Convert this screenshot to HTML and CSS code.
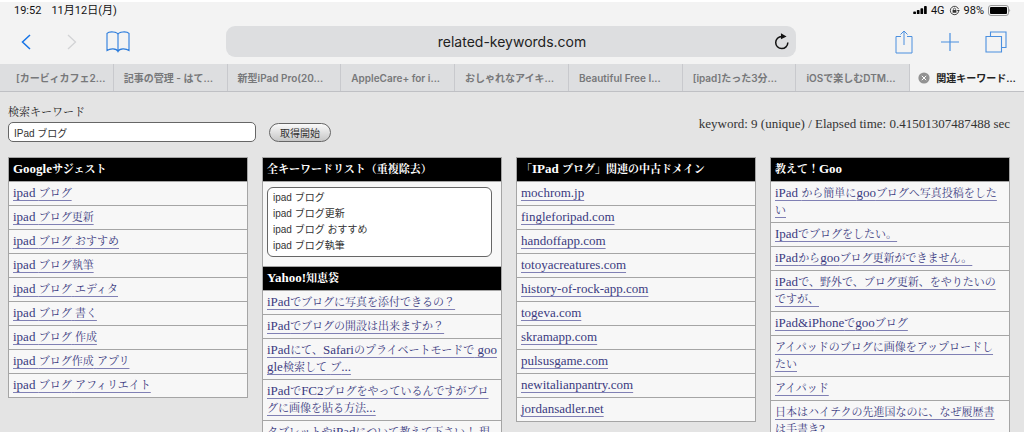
FILE: index.html
```html
<!DOCTYPE html>
<html lang="ja">
<head>
<meta charset="utf-8">
<title>関連キーワード取得ツール</title>
<link rel="stylesheet" href="styles.css">
</head>
<body>
<header class="browser">
  <div class="status">
    <div class="status-group status-clock"><span>19:52</span><span>11月12日(月)</span></div>
    <div class="status-group">
      <svg class="signal" viewBox="0 0 15 10" aria-hidden="true"><rect x="0" y="6" width="3" height="3" rx="0.8"/><rect x="4" y="4.5" width="3" height="4.5" rx="0.8"/><rect x="8" y="2.5" width="3" height="6.5" rx="0.8"/><rect x="12" y="0" width="3" height="9" rx="0.8"/></svg>
      <span>4G</span>
      <svg class="lock" viewBox="0 0 11 11" aria-hidden="true"><path d="M9.6 6.6A4.2 4.2 0 1 1 9.5 4.1" fill="none" stroke="#333" stroke-width="0.9"/><path d="M7.8 4.9h3L9.4 6.9z" fill="#333"/><rect x="3.6" y="5" width="3.8" height="2.8" rx="0.4" fill="#333"/><path d="M4.4 5V4.2a1.1 1.1 0 0 1 2.2 0V5" fill="none" stroke="#333" stroke-width="0.7"/></svg>
      <span>98%</span>
      <svg class="battery" viewBox="0 0 23 11" aria-hidden="true"><rect x="0.5" y="0.5" width="20" height="10" rx="2.5" fill="none" stroke="#999"/><rect x="2" y="2" width="17" height="7" rx="1" fill="#000"/><path d="M21.5 3.8q1.4 1.7 0 3.4z" fill="#777"/></svg>
    </div>
  </div>
  <div class="toolbar">
    <div class="tools tools-left">
      <button class="tool" type="button" aria-label="戻る"><svg class="chevron" viewBox="0 0 10 16"><path d="M9 1L1.5 8L9 15" stroke="#1674e6" stroke-width="1.5"/></svg></button>
      <button class="tool" type="button" aria-label="進む"><svg class="chevron" viewBox="0 0 10 16"><path d="M1 1l7.500 7L1 15" stroke="#d2d3d5" stroke-width="1.300"/></svg></button>
      <button class="tool" type="button" aria-label="ブックマーク"><svg class="book" viewBox="0 0 24 22"><path d="M12 3.500C11.500 0.300 3 0.300 1 2.300V19.500C4 17.300 10.500 17 12 20.500C13.500 17 20 17.300 23 19.500V2.300C21 0.300 12.500 0.300 12 3.500V20.500" stroke="#2a7bdc" stroke-width="1.100"/></svg></button>
    </div>
    <div class="address">
      <span class="address-text">related-keywords.com</span>
      <button class="reload" type="button" aria-label="再読み込み"><svg viewBox="0 0 15 17"><path d="M8.500 3.200H7.300A5.700 5.700 0 1 0 13 9" fill="none" stroke="#111" stroke-width="1.400"/><path d="M6.500 0.200L11.800 3.200L6.500 5.800z" fill="#111"/></svg></button>
    </div>
    <div class="tools tools-right">
      <button class="tool" type="button" aria-label="共有"><svg class="share" viewBox="0 0 18 24"><path d="M6 6.500H1V23H17V6.500H12M9 15V1M5.500 4.500L9 1L12.500 4.500" stroke="#4a8fdf" stroke-width="1"/></svg></button>
      <button class="tool" type="button" aria-label="新規タブ"><svg class="plus" viewBox="0 0 18 18"><path d="M9 0V18M0 9H18" stroke="#4a8fdf" stroke-width="1.200"/></svg></button>
      <button class="tool" type="button" aria-label="タブ一覧"><svg class="stack" viewBox="0 0 22 22"><path d="M1 5.500H16.500V21H1zM5.500 5.500V1H21V16.500H16.500" stroke="#4a8fdf" stroke-width="1.100"/></svg></button>
    </div>
  </div>
  <nav class="tabs">
    <a class="tab tab-first" href="#">[カービィカフェ2...</a>
    <a class="tab" href="#">記事の管理 - はて…</a>
    <a class="tab" href="#">新型iPad Pro(20...</a>
    <a class="tab" href="#">AppleCare+ for i...</a>
    <a class="tab" href="#">おしゃれなアイキ…</a>
    <a class="tab" href="#">Beautiful Free I...</a>
    <a class="tab" href="#">[ipad]たった3分…</a>
    <a class="tab" href="#">iOSで楽しむDTM…</a>
    <a class="tab tab-active" href="#"><svg class="close" viewBox="0 0 12 12" aria-hidden="true"><circle cx="6" cy="6" r="5.600" fill="#929292"/><path d="M3.800 3.800l4.400 4.400M8.200 3.800L3.800 8.200" stroke="#fff" stroke-width="1"/></svg>関連キーワード…</a>
  </nav>
</header>
<main class="page">
  <form class="search">
    <div class="search-main">
      <label class="search-label" for="keyword">検索キーワード</label>
      <div class="search-row">
        <input class="keyword" id="keyword" type="text" value="IPad ブログ">
        <button class="submit" type="button">取得開始</button>
      </div>
    </div>
    <p class="elapsed">keyword: 9 (unique) / Elapsed time: 0.41501307487488 sec</p>
  </form>
  <div class="columns">
    <table class="list">
      <tr><th><span class="en">Google</span>サジェスト</th></tr>
      <tr><td><a href="#"><span class="en">ipad </span>ブログ</a></td></tr>
      <tr><td><a href="#"><span class="en">ipad </span>ブログ更新</a></td></tr>
      <tr><td><a href="#"><span class="en">ipad </span>ブログ<span class="en"> </span>おすすめ</a></td></tr>
      <tr><td><a href="#"><span class="en">ipad </span>ブログ執筆</a></td></tr>
      <tr><td><a href="#"><span class="en">ipad </span>ブログ<span class="en"> </span>エディタ</a></td></tr>
      <tr><td><a href="#"><span class="en">ipad </span>ブログ<span class="en"> </span>書く</a></td></tr>
      <tr><td><a href="#"><span class="en">ipad </span>ブログ<span class="en"> </span>作成</a></td></tr>
      <tr><td><a href="#"><span class="en">ipad </span>ブログ作成<span class="en"> </span>アプリ</a></td></tr>
      <tr><td><a href="#"><span class="en">ipad </span>ブログ<span class="en"> </span>アフィリエイト</a></td></tr>
    </table>
    <table class="list">
      <tr><th><label for="all">全キーワードリスト（重複除去）</label></th></tr>
      <tr><td class="all-cell"><textarea class="all" id="all" rows="4">ipad ブログ
ipad ブログ更新
ipad ブログ おすすめ
ipad ブログ執筆</textarea></td></tr>
      <tr><th><span class="en">Yahoo!</span>知恵袋</th></tr>
      <tr><td><a href="#"><span class="en">iPad</span>でブログに写真を添付できるの？</a></td></tr>
      <tr><td><a href="#"><span class="en">iPad</span>でブログの開設は出来ますか？</a></td></tr>
      <tr><td><a href="#"><span class="en">iPad</span>にて、<span class="en">Safari</span>のプライベートモードで<span class="en"> google</span>検索して<span class="en"> </span>ブ<span class="en">...</span></a></td></tr>
      <tr><td><a href="#"><span class="en">iPad</span>で<span class="en">FC2</span>ブログをやっているんですがブログに画像を貼る方法<span class="en">...</span></a></td></tr>
      <tr><td><a href="#">タブレットや<span class="en">iPad</span>について教えて下さい！ 現</a></td></tr>
    </table>
    <table class="list">
      <tr><th>「<span class="en">IPad </span>ブログ」関連の中古ドメイン</th></tr>
      <tr><td><a class="en" href="#">mochrom.jp</a></td></tr>
      <tr><td><a class="en" href="#">fingleforipad.com</a></td></tr>
      <tr><td><a class="en" href="#">handoffapp.com</a></td></tr>
      <tr><td><a class="en" href="#">totoyacreatures.com</a></td></tr>
      <tr><td><a class="en" href="#">history-of-rock-app.com</a></td></tr>
      <tr><td><a class="en" href="#">togeva.com</a></td></tr>
      <tr><td><a class="en" href="#">skramapp.com</a></td></tr>
      <tr><td><a class="en" href="#">pulsusgame.com</a></td></tr>
      <tr><td><a class="en" href="#">newitalianpantry.com</a></td></tr>
      <tr><td><a class="en" href="#">jordansadler.net</a></td></tr>
    </table>
    <table class="list">
      <tr><th>教えて！<span class="en">Goo</span></th></tr>
      <tr><td><a href="#"><span class="en">iPad </span>から簡単に<span class="en">goo</span>ブログへ写真投稿をしたい</a></td></tr>
      <tr><td><a href="#"><span class="en">Ipad</span>でブログをしたい。</a></td></tr>
      <tr><td><a href="#"><span class="en">iPad</span>から<span class="en">goo</span>ブログ更新ができません。</a></td></tr>
      <tr><td><a href="#"><span class="en">iPad</span>で、野外で、ブログ更新、をやりたいのですが、</a></td></tr>
      <tr><td><a href="#"><span class="en">iPad&amp;iPhone</span>で<span class="en">goo</span>ブログ</a></td></tr>
      <tr><td><a href="#">アイパッドのブログに画像をアップロードし<br>たい</a></td></tr>
      <tr><td><a href="#">アイパッド</a></td></tr>
      <tr><td><a href="#">日本はハイテクの先進国なのに、なぜ履歴書は手書き<span class="en">?</span></a></td></tr>
    </table>
  </div>
</main>
</body>
</html>
```
FILE: styles.css
```css
* { box-sizing: border-box; }

body {
  margin: 0;
  height: 100vh;
  overflow: hidden;
  display: flex;
  flex-direction: column;
  background: #e4e4e4;
  font-family: Inter, "Noto Sans CJK JP", sans-serif;
  color: #222;
}

button { border: 0; padding: 0; background: none; font: inherit; }
svg { display: block; }

.browser { flex: none; background: #f3f3f3; border-top: 2px solid #fff; }

.status {
  display: flex;
  justify-content: space-between;
  height: 17px;
  padding: 0 13px 0 14px;
  font-family: Roboto, "Noto Sans CJK JP", sans-serif;
  font-size: 11px;
  line-height: 17px;
  color: #111;
}
.status-group { display: flex; align-items: center; gap: 4px; }
.status-clock { gap: 10px; }
.signal { width: 14px; height: 9px; }
.lock { width: 11px; height: 11px; }
.battery { width: 23px; height: 11px; }

.toolbar {
  display: flex;
  align-items: center;
  height: 45px;
}
.tools { flex: 1; display: flex; align-items: center; }
.tools-left { padding-left: 3px; }
.tools-right { justify-content: flex-end; padding-right: 5px; }
.tool { width: 46px; display: flex; justify-content: center; }
.tool path { fill: none; }
.chevron { width: 10px; height: 16px; }
.book { width: 24px; height: 22px; }
.share { width: 18px; height: 24px; }
.plus { width: 18px; height: 18px; }
.stack { width: 22px; height: 22px; }

.address {
  flex: 0 1 570px;
  display: flex;
  align-items: center;
  height: 31px;
  padding: 0 6px 0 24px;
  border-radius: 9px;
  background: #dddee0;
}
.address-text { flex: 1; text-align: center; font-size: 14px; color: #222; }
.reload { width: 16px; height: 17px; }

.tabs {
  display: grid;
  grid-template-columns: repeat(9, 1fr);
  height: 28px;
  border-bottom: 1px solid #bfc0c4;
}
.tab {
  display: flex;
  align-items: center;
  padding-left: 10px;
  overflow: hidden;
  white-space: nowrap;
  border-right: 1px solid #c8c9cd;
  background: #dddee0;
  font-size: 10px;
  font-weight: 600;
  color: #77787a;
  text-decoration: none;
}
.tab-first { padding-left: 16px; }
.tab-active { gap: 6px; padding-left: 8px; border-right: 0; background: #f3f3f3; color: #222; }
.close { flex: none; width: 12px; height: 12px; }

.page {
  flex: 1;
  min-height: 0;
  overflow: hidden;
  padding: 12px 14px 0 8px;
  font-family: "Liberation Serif", "Noto Serif CJK JP", "Noto Sans CJK JP", serif;
  font-size: 11px;
  line-height: 17px;
}
.en { font-size: 13px; line-height: 1; }

.search { display: flex; justify-content: space-between; align-items: center; }
.search-label { display: block; margin-bottom: 1px; }
.search-row { display: flex; align-items: center; gap: 13px; }
.keyword {
  width: 248px;
  height: 20px;
  padding: 0 5px;
  border: 1px solid #666;
  border-radius: 5px;
  background: #fff;
  font: 10px "Liberation Sans", "Noto Sans CJK JP", sans-serif;
  color: #333;
}
.submit {
  width: 62px;
  height: 19px;
  border: 1px solid #666;
  border-radius: 10px;
  background: linear-gradient(#fafafa, #c6c6c6);
  font: 10px "Noto Sans CJK JP", sans-serif;
  color: #333;
}
.elapsed { margin: 0; font-size: 13px; color: #333; }

.columns {
  display: grid;
  grid-template-columns: repeat(4, 1fr);
  align-items: start;
  gap: 14px;
  margin-top: 15px;
}
.list {
  width: 100%;
  table-layout: fixed;
  border-collapse: collapse;
  background: #f7f7f7;
}
.list th, .list td {
  padding: 3px 4px;
  border: 1px solid #a5a5a5;
  text-align: left;
  word-break: break-all;
}
.list th { background: #000; color: #fff; }
.list a {
  color: #3a3a80;
  text-decoration: underline 1px #8080b4;
  text-underline-offset: 3px;
}
.list .all-cell { padding: 5px 9px 9px 4px; }
.all {
  display: block;
  width: 100%;
  height: 70px;
  padding: 2px 5px;
  overflow: hidden;
  resize: none;
  border: 1px solid #666;
  border-radius: 6px;
  background: #fff;
  font: 10px/16px "Liberation Sans", "Noto Sans CJK JP", sans-serif;
  color: #333;
}
```
